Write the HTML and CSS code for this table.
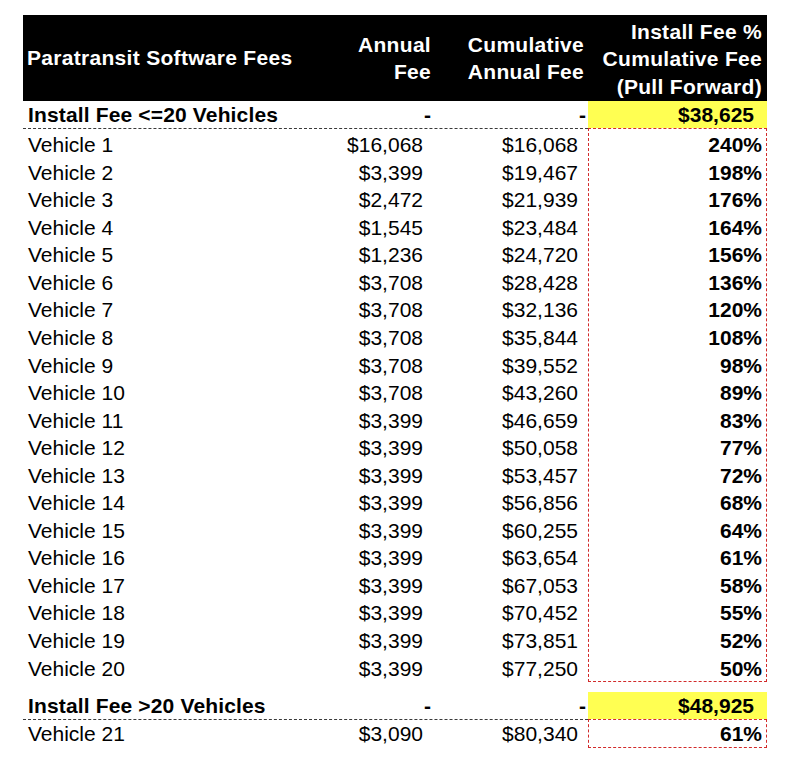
FILE: index.html
```html
<!DOCTYPE html>
<html>
<head>
<meta charset="utf-8">
<link rel="stylesheet" href="styles.css">
</head>
<body>
<div class="sheet">
  <div class="head">
    <div class="hc h-name">Paratransit Software Fees</div>
    <div class="hc h-num h2">Annual<br>Fee</div>
    <div class="hc h-num h3">Cumulative<br>Annual Fee</div>
    <div class="hc h-num h4">Install Fee %<br>Cumulative Fee<br>(Pull Forward)</div>
  </div>

  <div class="section">
    <div class="sc name">Install Fee &lt;=20 Vehicles</div>
    <div class="sc dash">-</div>
    <div class="sc dash">-</div>
    <div class="sc install">$38,625</div>
  </div>

  <div class="block">
    <div class="cols">
      <div class="cell name">Vehicle 1</div><div class="cell num">$16,068</div><div class="cell num">$16,068</div>
      <div class="cell name">Vehicle 2</div><div class="cell num">$3,399</div><div class="cell num">$19,467</div>
      <div class="cell name">Vehicle 3</div><div class="cell num">$2,472</div><div class="cell num">$21,939</div>
      <div class="cell name">Vehicle 4</div><div class="cell num">$1,545</div><div class="cell num">$23,484</div>
      <div class="cell name">Vehicle 5</div><div class="cell num">$1,236</div><div class="cell num">$24,720</div>
      <div class="cell name">Vehicle 6</div><div class="cell num">$3,708</div><div class="cell num">$28,428</div>
      <div class="cell name">Vehicle 7</div><div class="cell num">$3,708</div><div class="cell num">$32,136</div>
      <div class="cell name">Vehicle 8</div><div class="cell num">$3,708</div><div class="cell num">$35,844</div>
      <div class="cell name">Vehicle 9</div><div class="cell num">$3,708</div><div class="cell num">$39,552</div>
      <div class="cell name">Vehicle 10</div><div class="cell num">$3,708</div><div class="cell num">$43,260</div>
      <div class="cell name">Vehicle 11</div><div class="cell num">$3,399</div><div class="cell num">$46,659</div>
      <div class="cell name">Vehicle 12</div><div class="cell num">$3,399</div><div class="cell num">$50,058</div>
      <div class="cell name">Vehicle 13</div><div class="cell num">$3,399</div><div class="cell num">$53,457</div>
      <div class="cell name">Vehicle 14</div><div class="cell num">$3,399</div><div class="cell num">$56,856</div>
      <div class="cell name">Vehicle 15</div><div class="cell num">$3,399</div><div class="cell num">$60,255</div>
      <div class="cell name">Vehicle 16</div><div class="cell num">$3,399</div><div class="cell num">$63,654</div>
      <div class="cell name">Vehicle 17</div><div class="cell num">$3,399</div><div class="cell num">$67,053</div>
      <div class="cell name">Vehicle 18</div><div class="cell num">$3,399</div><div class="cell num">$70,452</div>
      <div class="cell name">Vehicle 19</div><div class="cell num">$3,399</div><div class="cell num">$73,851</div>
      <div class="cell name">Vehicle 20</div><div class="cell num">$3,399</div><div class="cell num">$77,250</div>
    </div>
    <div class="pcts">
      <div class="cell pct">240%</div>
      <div class="cell pct">198%</div>
      <div class="cell pct">176%</div>
      <div class="cell pct">164%</div>
      <div class="cell pct">156%</div>
      <div class="cell pct">136%</div>
      <div class="cell pct">120%</div>
      <div class="cell pct">108%</div>
      <div class="cell pct">98%</div>
      <div class="cell pct">89%</div>
      <div class="cell pct">83%</div>
      <div class="cell pct">77%</div>
      <div class="cell pct">72%</div>
      <div class="cell pct">68%</div>
      <div class="cell pct">64%</div>
      <div class="cell pct">61%</div>
      <div class="cell pct">58%</div>
      <div class="cell pct">55%</div>
      <div class="cell pct">52%</div>
      <div class="cell pct">50%</div>
    </div>
  </div>

  <div class="section second">
    <div class="sc name">Install Fee &gt;20 Vehicles</div>
    <div class="sc dash">-</div>
    <div class="sc dash">-</div>
    <div class="sc install">$48,925</div>
  </div>

  <div class="block single">
    <div class="cols">
      <div class="cell name">Vehicle 21</div><div class="cell num">$3,090</div><div class="cell num">$80,340</div>
    </div>
    <div class="pcts">
      <div class="cell pct">61%</div>
    </div>
  </div>
</div>
</body>
</html>
```

FILE: styles.css
```css
html, body {
  margin: 0;
  padding: 0;
  background: #ffffff;
}

body {
  font-family: "Liberation Sans", Arial, sans-serif;
  font-size: 21px;
  color: #000000;
}

.sheet {
  margin: 15px 0 0 23px;
  width: 744px;
}

/* header */
.head {
  display: grid;
  grid-template-columns: 300px 110px 155px 179px;
  height: 86px;
  background: #000000;
  color: #ffffff;
  font-weight: bold;
  line-height: 27.5px;
  letter-spacing: 0.3px;
  align-items: center;
  white-space: nowrap;
}

.h-name { padding-left: 4px; }
.h-num { text-align: right; }
.h2 { padding-right: 2px; }
.h3 { padding-right: 4px; }
.h4 { padding-right: 5px; padding-top: 2px; }

/* section rows */
.section {
  display: grid;
  grid-template-columns: 300px 110px 155px 179px;
  height: 27px;
  font-weight: bold;
  line-height: 21px;
  white-space: nowrap;
}

.section.second {
  margin-top: 10px;
}

.sc {
  padding-top: 2.7px;
}

.sc.name {
  padding-left: 5px;
  letter-spacing: 0.15px;
}

.sc.dash {
  text-align: right;
  padding-right: 2px;
}

.sc.install {
  background: #ffff52;
  text-align: right;
  padding-right: 13px;
}

/* vehicle blocks */
.block {
  display: flex;
  align-items: flex-start;
}

.cols {
  width: 565px;
  display: grid;
  grid-template-columns: 300px 110px 155px;
  grid-auto-rows: 27.55px;
  border-top: 1px dashed #3a3a3a;
}

.pcts {
  width: 179px;
  box-sizing: border-box;
  display: flex;
  flex-direction: column;
  border: 1px dashed #d22b2b;
  padding-bottom: 1px;
}

.cell {
  height: 27.55px;
  box-sizing: border-box;
  line-height: 21px;
  padding-top: 5.2px;
  white-space: nowrap;
}

.single .cols {
  grid-auto-rows: 27px;
}

.single .cell {
  height: 27px;
  padding-top: 3px;
}

.single .pcts {
  padding-bottom: 0;
}

.name {
  padding-left: 5px;
}

.num {
  text-align: right;
  padding-right: 10px;
}

.pct {
  text-align: right;
  font-weight: bold;
  padding-right: 4px;
}
```
